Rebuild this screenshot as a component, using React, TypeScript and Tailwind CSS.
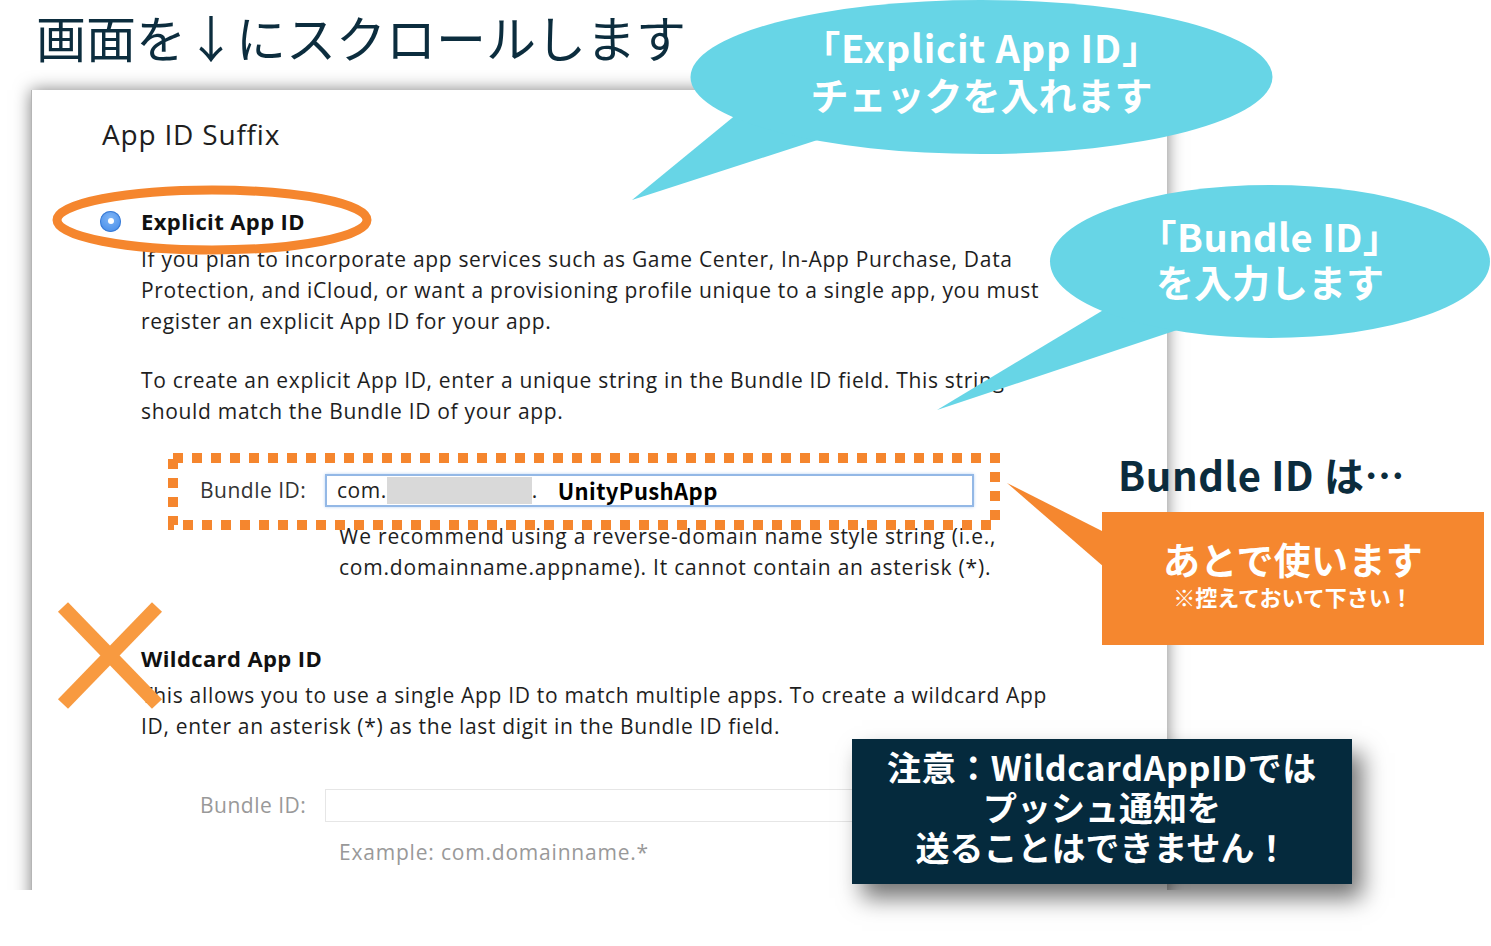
import React from "react";

const jp = "font-['Noto_Sans_CJK_JP','Noto_Sans',sans-serif]";

function Radio() {
    return (
        <span className="flex items-center justify-center w-[21px] h-[21px] rounded-full bg-[radial-gradient(circle_at_50%_35%,#7fb6f7,#3f86e6)] shadow-[inset_0_0_0_1px_#3a7bd5]">
            <span className="w-[6px] h-[6px] rounded-full bg-white" />
        </span>
    );
}

function Panel() {
    return (
        <div className="w-[1136px] h-[860px] bg-white shadow-[0_0_16px_rgba(0,0,0,0.5)] border-l border-[#b5b5b5] pt-[26px] pl-[70px] font-['Open_Sans',sans-serif] text-[#1e1e1e]">
            <div className="text-[28px] leading-[36px] tracking-[0.8px]">App ID Suffix</div>

            {/* Explicit */}
            <div className="mt-[51px] flex items-center h-[36px] -ml-[2px]">
                <Radio />
                <span className="ml-[20px] font-bold text-[22px] tracking-[0.4px] text-[#111]">Explicit App ID</span>
            </div>
            <div className="ml-[39px] mt-[5px] text-[21px] leading-[31px] tracking-[0.68px] whitespace-nowrap">
                <div>If you plan to incorporate app services such as Game Center, In-App Purchase, Data</div>
                <div>Protection, and iCloud, or want a provisioning profile unique to a single app, you must</div>
                <div>register an explicit App ID for your app.</div>
            </div>
            <div className="ml-[39px] mt-[28px] text-[21px] leading-[31px] tracking-[0.68px] whitespace-nowrap">
                <div>To create an explicit App ID, enter a unique string in the Bundle ID field. This string</div>
                <div>should match the Bundle ID of your app.</div>
            </div>
            <div className="ml-[98px] mt-[47px] flex items-center h-[33px]">
                <span className="w-[125px] text-[21px] tracking-[0.5px] text-[#333]">Bundle ID:</span>
                <div className="w-[649px] h-[33px] border-2 border-[#93b8e6] shadow-[0_0_3px_#b9d3f3] flex items-center pl-[10px] text-[21px] tracking-[0.5px] text-[#222]">
                    <span>com.</span>
                    <span className="w-[145px] h-[27px] bg-[#d9d9d9]" />
                    <span>.</span>
                    <span className={`ml-[20px] ${jp} font-bold text-[22px] tracking-[0.4px] text-black`}>UnityPushApp</span>
                </div>
            </div>
            <div className="ml-[237px] mt-[14px] text-[21px] leading-[31px] tracking-[0.8px] whitespace-nowrap">
                <div>We recommend using a reverse-domain name style string (i.e.,</div>
                <div>com.domainname.appname). It cannot contain an asterisk (*).</div>
            </div>

            {/* Wildcard */}
            <div className="ml-[39px] mt-[57px] h-[36px] flex items-center font-bold text-[22px] tracking-[0.4px] text-[#111]">Wildcard App ID</div>
            <div className="ml-[39px] mt-[4px] text-[21px] leading-[31px] tracking-[0.68px] whitespace-nowrap">
                <div>This allows you to use a single App ID to match multiple apps. To create a wildcard App</div>
                <div>ID, enter an asterisk (*) as the last digit in the Bundle ID field.</div>
            </div>
            <div className="ml-[98px] mt-[47px] flex items-center h-[33px]">
                <span className="w-[125px] text-[21px] tracking-[0.5px] text-[#999]">Bundle ID:</span>
                <div className="w-[649px] h-[33px] border border-[#e6e6e6]" />
            </div>
            <div className="ml-[237px] mt-[15px] text-[21px] leading-[31px] tracking-[0.8px] text-[#999]">Example: com.domainname.*</div>
        </div>
    );
}

export default function App() {
    return (
        <div className="relative w-[1491px] h-[946px] bg-white overflow-hidden">
            <div className={`h-[70px] pt-[6px] pl-[36px] ${jp} text-[50px] leading-[60px] text-[#0c2d3e] whitespace-nowrap`}>
                画面を↓にスクロールします
            </div>
            <div className="h-[820px] w-[1210px] pt-[20px] pl-[31px] overflow-hidden">
                <Panel />
            </div>

            {/* annotations over the screenshot */}
            <svg className="absolute left-0 top-0 pointer-events-none" width="1491" height="946">
                <ellipse cx="212" cy="220" rx="155" ry="30" fill="none" stroke="#f5862e" strokeWidth="9" />
                <rect x="173" y="458" width="822" height="67" fill="none" stroke="#f5862e" strokeWidth="10" strokeDasharray="10 9" />
                <line x1="63" y1="607" x2="157" y2="704" stroke="#f89a40" strokeWidth="14" />
                <line x1="157" y1="607" x2="63" y2="704" stroke="#f89a40" strokeWidth="14" />
            </svg>

            {/* bubble 1 */}
            <div className="absolute left-[690px] top-0 w-[583px] h-[154px]">
                <svg className="absolute inset-0 overflow-visible" width="583" height="154">
                    <polygon points="-58,200 75,91 183,122" fill="#67d5e6" />
                    <ellipse cx="291.5" cy="77" rx="291" ry="77" fill="#67d5e6" />
                </svg>
                <div className={`relative h-full flex flex-col items-center justify-center pb-[14px] ${jp} font-bold text-[38px] leading-[47px] text-white`}>
                    <div className="tracking-[0.8px]">「Explicit App ID」</div>
                    <div>チェックを入れます</div>
                </div>
            </div>

            {/* bubble 2 */}
            <div className="absolute left-[1050px] top-[185px] w-[440px] h-[153px]">
                <svg className="absolute inset-0 overflow-visible" width="440" height="153">
                    <polygon points="-113,225 130,79 220,114" fill="#67d5e6" />
                    <ellipse cx="220" cy="76.5" rx="220" ry="76.5" fill="#67d5e6" />
                </svg>
                <div className={`relative h-full flex flex-col items-center justify-center pb-[8px] ${jp} font-bold text-[38px] leading-[45px] text-white`}>
                    <div className="tracking-[0.5px]">「Bundle ID」</div>
                    <div>を入力します</div>
                </div>
            </div>

            <div className={`absolute left-[1118px] top-[448px] ${jp} font-bold text-[40px] leading-[52px] tracking-[0.6px] text-[#0b2c3d] whitespace-nowrap`}>
                Bundle ID は…
            </div>

            {/* orange box */}
            <div className="absolute left-[1102px] top-[512px] w-[382px] h-[133px] bg-[#f5872f]">
                <svg className="absolute left-0 top-0 overflow-visible" width="1" height="1">
                    <polygon points="-95,-29 2,20 2,55" fill="#f5872f" />
                </svg>
                <div className={`relative h-full flex flex-col items-center justify-center pb-[10px] ${jp} font-bold text-white`}>
                    <div className="text-[37px] leading-[44px] tracking-[0.3px]">あとで使います</div>
                    <div className="text-[22px] leading-[30px]">※控えておいて下さい！</div>
                </div>
            </div>

            {/* dark note */}
            <div className={`absolute left-[852px] top-[739px] w-[500px] h-[145px] bg-[#052a3d] shadow-[10px_14px_22px_rgba(0,0,0,0.55)] flex flex-col items-center justify-center pb-[10px] ${jp} font-bold text-[34px] leading-[40px] text-white`}>
                <div className="tracking-[0.6px]">注意：WildcardAppIDでは</div>
                <div>プッシュ通知を</div>
                <div>送ることはできません！</div>
            </div>
        </div>
    );
}
